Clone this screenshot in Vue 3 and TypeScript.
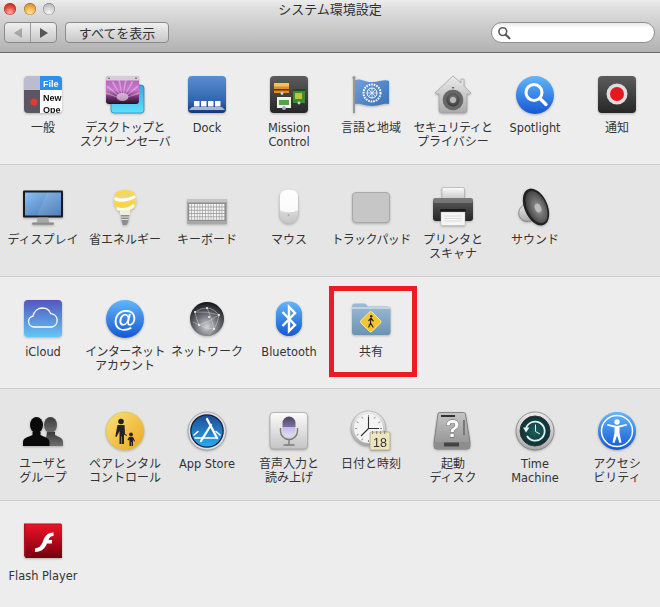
<script setup lang="ts">
interface Item { id: string; lines: string[] }
const sections: Item[][] = [
  [
    { id: 'general', lines: ['一般'] },
    { id: 'desktop', lines: ['デスクトップと', 'スクリーンセーバ'] },
    { id: 'dock', lines: ['Dock'] },
    { id: 'mission', lines: ['Mission', 'Control'] },
    { id: 'flag', lines: ['言語と地域'] },
    { id: 'security', lines: ['セキュリティと', 'プライバシー'] },
    { id: 'spotlight', lines: ['Spotlight'] },
    { id: 'notify', lines: ['通知'] },
  ],
  [
    { id: 'display', lines: ['ディスプレイ'] },
    { id: 'bulb', lines: ['省エネルギー'] },
    { id: 'keyboard', lines: ['キーボード'] },
    { id: 'mouse', lines: ['マウス'] },
    { id: 'trackpad', lines: ['トラックパッド'] },
    { id: 'printer', lines: ['プリンタと', 'スキャナ'] },
    { id: 'sound', lines: ['サウンド'] },
  ],
  [
    { id: 'icloud', lines: ['iCloud'] },
    { id: 'internet', lines: ['インターネット', 'アカウント'] },
    { id: 'network', lines: ['ネットワーク'] },
    { id: 'bluetooth', lines: ['Bluetooth'] },
    { id: 'share', lines: ['共有'] },
  ],
  [
    { id: 'users', lines: ['ユーザと', 'グループ'] },
    { id: 'parental', lines: ['ペアレンタル', 'コントロール'] },
    { id: 'appstore', lines: ['App Store'] },
    { id: 'dictation', lines: ['音声入力と', '読み上げ'] },
    { id: 'clock', lines: ['日付と時刻'] },
    { id: 'disk', lines: ['起動', 'ディスク'] },
    { id: 'timemachine', lines: ['Time', 'Machine'] },
    { id: 'access', lines: ['アクセシ', 'ビリティ'] },
  ],
  [{ id: 'flash', lines: ['Flash Player'] }],
]
const isLatin = (s: string) => /^[A-Za-z ]+$/.test(s)
const keys: { x: number; y: number; w: number }[] = []
for (let r = 0; r < 5; r++) {
  for (let c = 0; c < 13; c++) {
    keys.push({ x: 2.2 + c * 2.75, y: 18 + r * 3.3, w: 2.2 })
  }
}
const ticks = [0, 30, 60, 90, 120, 150, 180, 210, 240, 270, 300, 330]
const rays = [0, 45, 90, 135, 180, 225, 270, 315]
const bursts = [-70, -50, -30, -10, 10, 30, 50, 70]
</script>

<template>
  <div class="window">
    <svg class="defs" width="0" height="0" aria-hidden="true">
      <defs>
        <linearGradient id="gBlueCircle" x1="0" y1="0" x2="0" y2="1"><stop offset="0" stop-color="#62b6fb" /><stop offset="1" stop-color="#1458d2" /></linearGradient>
        <linearGradient id="gDock" x1="0" y1="0" x2="0" y2="1"><stop offset="0" stop-color="#5b8ed0" /><stop offset=".7" stop-color="#2f64ad" /><stop offset="1" stop-color="#16386e" /></linearGradient>
        <linearGradient id="gDark" x1="0" y1="0" x2="0" y2="1"><stop offset="0" stop-color="#5c5c5c" /><stop offset="1" stop-color="#262626" /></linearGradient>
        <linearGradient id="gSilver" x1="0" y1="0" x2="0" y2="1"><stop offset="0" stop-color="#ececec" /><stop offset="1" stop-color="#a9a9a9" /></linearGradient>
        <linearGradient id="gDiskTop" x1="0" y1="0" x2="0" y2="1"><stop offset="0" stop-color="#c4c4c4" /><stop offset="1" stop-color="#8f8f8f" /></linearGradient>
        <linearGradient id="gPink" x1="0" y1="0" x2="0" y2="1"><stop offset="0" stop-color="#b060b8" /><stop offset=".5" stop-color="#c878cc" /><stop offset=".78" stop-color="#6a3068" /><stop offset="1" stop-color="#241222" /></linearGradient>
        <linearGradient id="gCyan" x1="0" y1="0" x2="0" y2="1"><stop offset="0" stop-color="#3aa3e8" /><stop offset="1" stop-color="#5fe0fb" /></linearGradient>
        <linearGradient id="gFlag" x1="0" y1="0" x2="1" y2="1"><stop offset="0" stop-color="#6f9fdc" /><stop offset="1" stop-color="#3c6fb8" /></linearGradient>
        <linearGradient id="gScreen" x1="0" y1="0" x2="1" y2="1"><stop offset="0" stop-color="#8cc0f4" /><stop offset="1" stop-color="#3f70b0" /></linearGradient>
        <linearGradient id="gCloud" x1="0" y1="0" x2="0" y2="1"><stop offset="0" stop-color="#5456c0" /><stop offset="1" stop-color="#62c6f4" /></linearGradient>
        <linearGradient id="gFolder" x1="0" y1="0" x2="0" y2="1"><stop offset="0" stop-color="#9dbcd4" /><stop offset="1" stop-color="#6a93b2" /></linearGradient>
        <linearGradient id="gYellow" x1="0" y1="0" x2="1" y2="1"><stop offset="0" stop-color="#f6e27a" /><stop offset="1" stop-color="#eda61f" /></linearGradient>
        <linearGradient id="gAppStore" x1="0" y1="0" x2="0" y2="1"><stop offset="0" stop-color="#1d4d94" /><stop offset="1" stop-color="#28a9f4" /></linearGradient>
        <linearGradient id="gMic" x1="0" y1="0" x2="0" y2="1"><stop offset="0" stop-color="#4a4560" /><stop offset=".5" stop-color="#7a709c" /><stop offset=".55" stop-color="#c3b8ea" /><stop offset="1" stop-color="#e3dcf8" /></linearGradient>
        <linearGradient id="gDict" x1="0" y1="0" x2="0" y2="1"><stop offset="0" stop-color="#fbfbfb" /><stop offset="1" stop-color="#c4c4c4" /></linearGradient>
        <linearGradient id="gFlash" x1="0" y1="0" x2="0" y2="1"><stop offset="0" stop-color="#ee1226" /><stop offset="1" stop-color="#74000f" /></linearGradient>
        <linearGradient id="gPeople" x1="0" y1="0" x2="0" y2="1"><stop offset="0" stop-color="#3a3a3a" /><stop offset="1" stop-color="#6f6f6f" /></linearGradient>
        <radialGradient id="gSphere" cx=".5" cy=".72" r=".7"><stop offset="0" stop-color="#d0d0d6" /><stop offset=".45" stop-color="#77777f" /><stop offset="1" stop-color="#15151a" /></radialGradient>
        <radialGradient id="gCone" cx=".55" cy=".55" r=".6"><stop offset="0" stop-color="#c8c8c8" /><stop offset=".3" stop-color="#7e7e7e" /><stop offset="1" stop-color="#3a3a3a" /></radialGradient>
        <radialGradient id="gTeal" cx=".5" cy=".5" r=".55"><stop offset="0" stop-color="#1f5f60" /><stop offset="1" stop-color="#0a2c30" /></radialGradient>
        <radialGradient id="gDial" cx=".5" cy=".4" r=".6"><stop offset="0" stop-color="#8a8a8a" /><stop offset="1" stop-color="#333" /></radialGradient>
        <clipPath id="cGeneral"><rect x="1" y="2" width="38" height="37" rx="4" /></clipPath>
        <clipPath id="cDesktop"><rect x="1" y="2" width="33" height="28" rx="3" /></clipPath>
      </defs>
    </svg>

    <header class="toolbar">
      <div class="title-row">
        <div class="lights">
          <span class="light red"></span>
          <span class="light amber"></span>
          <span class="light grey"></span>
        </div>
        <span class="title">システム環境設定</span>
      </div>
      <div class="control-row">
        <div class="segment">
          <span class="seg-cell"><i class="arrow left off"></i></span>
          <span class="seg-cell"><i class="arrow right"></i></span>
        </div>
        <button class="show-all">すべてを表示</button>
        <div class="search">
          <svg width="14" height="14" viewBox="0 0 14 14"><circle cx="5.8" cy="5.6" r="3.9" fill="none" stroke="#5a5a5a" stroke-width="1.6" /><path d="M8.8 8.7 12.4 12.3" stroke="#5a5a5a" stroke-width="2.2" stroke-linecap="round" /></svg>
        </div>
      </div>
    </header>

    <section v-for="(row, i) in sections" :key="i" class="row" :class="{ alt: i % 2 === 1, last: i === 4 }">
      <div v-for="it in row" :key="it.id" class="cell">
        <svg class="icon" viewBox="0 0 40 40" width="40" height="40">
          <g v-if="it.id === 'general'" clip-path="url(#cGeneral)">
            <rect x="1" y="2" width="16" height="14" fill="#bcbbcf" />
            <rect x="1" y="16" width="16" height="23" fill="#5b5662" />
            <rect x="17" y="2" width="22" height="14" fill="#2b8ff0" />
            <rect x="17" y="16" width="22" height="23" fill="#fff" />
            <circle cx="11" cy="28" r="3.6" fill="#e23b32" />
            <text x="20" y="12.500" class="svgt" fill="#fff" font-size="9" font-weight="700">File</text>
            <text x="20" y="27" class="svgt" fill="#111" font-size="9" font-weight="700">New</text>
            <text x="20" y="39" class="svgt" fill="#111" font-size="9" font-weight="700">Ope</text>
          </g>
          <g v-else-if="it.id === 'desktop'">
            <rect x="6" y="11" width="33" height="28" rx="3" fill="url(#gCyan)" stroke="#1c6fb4" stroke-width=".6" />
            <g clip-path="url(#cDesktop)">
              <rect x="1" y="2" width="33" height="28" fill="url(#gPink)" />
              <g fill="#f6d9f6" opacity=".45"><path v-for="a in bursts" :key="a" d="M17.500 25 16.500 5h2z" :transform="`rotate(${a} 17.500 25)`" /></g>
              <ellipse cx="17.500" cy="23" rx="6" ry="4" fill="#f8e4f8" opacity=".6" />
              <rect x="1" y="2" width="33" height="4.500" fill="#d8ccd8" />
            </g>
            <circle cx="4" cy="4.200" r=".8" fill="#555" /><circle cx="31" cy="4.200" r=".8" fill="#555" />
          </g>
          <g v-else-if="it.id === 'dock'">
            <rect x="1" y="2" width="38" height="37" rx="4" fill="url(#gDock)" />
            <g fill="#fff"><rect x="7" y="27" width="5.500" height="5.500" /><rect x="14" y="27" width="5.500" height="5.500" /><rect x="21" y="27" width="5.500" height="5.500" /><rect x="28" y="27" width="5.500" height="5.500" /></g>
            <path d="M5 33h30l3 3H2z" fill="#cfdcf0" opacity=".75" />
          </g>
          <g v-else-if="it.id === 'mission'">
            <rect x="1" y="2" width="38" height="37" rx="4" fill="url(#gDark)" />
            <rect x="5" y="9" width="15" height="10" fill="#e38a2a" /><rect x="5" y="9" width="15" height="3.500" fill="#f3c25c" /><rect x="5" y="15" width="15" height="1.500" fill="#5a2e12" />
            <rect x="24" y="15" width="12" height="14" fill="#3f8a32" /><rect x="26" y="19" width="7" height="6" fill="#b6c93c" /><rect x="24" y="15" width="12" height="2" fill="#1e4a1c" />
            <rect x="8" y="23" width="14" height="11" fill="#eef2e8" /><rect x="10" y="26" width="10" height="5" fill="#58a14a" />
            <circle cx="13" cy="19.500" r="1.400" fill="#cdd3de" /><circle cx="30" cy="29" r="1.400" fill="#cdd3de" /><circle cx="15" cy="34" r="2" fill="#b9a4d8" />
          </g>
          <g v-else-if="it.id === 'flag'">
            <rect x="2.200" y="4" width="1.600" height="35" fill="#8d8d8d" />
            <circle cx="3" cy="3.600" r="1.600" fill="#9a9a9a" />
            <path d="M4 6c6-2 9 2 17 2s12-3 17-1v23c-6-1-9 2-17 2s-11-3-17-2z" fill="url(#gFlag)" />
            <circle cx="21" cy="19" r="8.500" fill="none" stroke="#fff" stroke-width="2" stroke-dasharray="1.600 1" />
            <circle cx="21" cy="19" r="5" fill="none" stroke="#fff" stroke-width="1" />
            <g stroke="#fff" stroke-width=".7"><line v-for="a in rays" :key="a" x1="21" y1="19" x2="21" y2="14" :transform="`rotate(${a} 21 19)`" /></g>
          </g>
          <g v-else-if="it.id === 'security'">
            <path d="M20 2 28 9V5h3v7l7 7-2 1H34V36a3 3 0 0 1-3 3H9a3 3 0 0 1-3-3V20H4l-2-1z" fill="url(#gSilver)" stroke="#9a9a9a" stroke-width=".6" />
            <circle cx="20" cy="26" r="10.500" fill="#666" /><circle cx="20" cy="26" r="10.500" fill="none" stroke="#c7c7c7" stroke-dasharray="1 1" stroke-width=".8" />
            <circle cx="20" cy="26" r="6.500" fill="url(#gDial)" /><circle cx="20" cy="26" r="3" fill="#bbb" />
            <path d="M18.500 13 20 15 21.500 13z" fill="#666" />
          </g>
          <g v-else-if="it.id === 'spotlight'">
            <circle cx="20" cy="21" r="19" fill="url(#gBlueCircle)" />
            <circle cx="19" cy="18.500" r="8" fill="none" stroke="#fff" stroke-width="3" />
            <path d="M25 24.500 31 30.500" stroke="#fff" stroke-width="3.400" stroke-linecap="round" />
          </g>
          <g v-else-if="it.id === 'notify'">
            <rect x="1" y="2" width="38" height="37" rx="4" fill="url(#gDark)" />
            <circle cx="20" cy="20" r="10.500" fill="#ddd" /><circle cx="20" cy="20" r="7" fill="#e8161f" />
          </g>
          <g v-else-if="it.id === 'display'">
            <rect x="0" y="4.500" width="40" height="27" rx="1" fill="#1b1b1b" />
            <rect x="2" y="6.500" width="36" height="23" fill="url(#gScreen)" />
            <path d="M24 6.500H38V29.500H14z" fill="#fff" opacity=".1" />
            <path d="M15 31.500h10l1 5H14z" fill="#a8a8a8" />
            <rect x="9" y="36.500" width="22" height="2.200" rx="1" fill="#8b8b8b" />
          </g>
          <g v-else-if="it.id === 'bulb'">
            <ellipse cx="20" cy="15" rx="11.500" ry="11" fill="#ffe36a" opacity=".7" />
            <g fill="none" stroke-linecap="round" stroke-width="3.200">
              <path d="M12 8c4-3 13-3 16 0" stroke="#ffd83c" />
              <path d="M11 13c5 2 13 1 18-2" stroke="#fffdf0" />
              <path d="M11 18c5 2 13 1 18-2" stroke="#ffd534" />
              <path d="M13 23c4 1 10 1 15-3" stroke="#fffbe2" />
            </g>
            <rect x="15" y="24" width="10" height="5" rx="1" fill="#efeee2" />
            <path d="M16 29h8l-.8 7-1.700 3h-3.500l-1.200-3z" fill="#8e8e8e" />
            <g stroke="#e4e4e4" stroke-width=".9"><line x1="16" y1="31" x2="24" y2="31" /><line x1="16.400" y1="33.500" x2="23.600" y2="33.500" /></g>
          </g>
          <g v-else-if="it.id === 'keyboard'">
            <rect x="0" y="13" width="40" height="25" rx="1" fill="#a8a8a8" />
            <rect x="0" y="13" width="40" height="3" fill="#c4c4c4" />
            <rect x="1" y="17" width="38" height="18" fill="#8e8e8e" />
            <rect v-for="(k, n) in keys" :key="n" :x="k.x" :y="k.y" :width="k.w" height="2.600" fill="#f4f4f4" />
          </g>
          <g v-else-if="it.id === 'mouse'">
            <rect x="10.300" y="3.300" width="19" height="34.500" rx="9.500" fill="url(#gDict)" stroke="#bdbdbd" stroke-width=".5" />
            <path d="M11 10c0-5 4-6.500 9-6.500s9 1.500 9 6.500v14c-5 3-13 3-18 0z" fill="#fff" opacity=".85" />
            <circle cx="19.500" cy="29" r="1" fill="#a5a5a5" />
          </g>
          <g v-else-if="it.id === 'trackpad'">
            <rect x="1.500" y="6.500" width="37" height="30" rx="3.500" fill="#c6c6c6" stroke="#a9a9a9" stroke-width="1" />
          </g>
          <g v-else-if="it.id === 'printer'">
            <path d="M10.500 1.500h19q2 0 2 2V14H9V3.500q0-2 1.500-2z" fill="url(#gDict)" stroke="#999" stroke-width=".5" />
            <path d="M3 12h34q3 0 3 3v17q0 3-3 3H3q-3 0-3-3V15q0-3 3-3z" fill="url(#gDark)" />
            <rect x="0" y="12" width="40" height="5" fill="#8d8d8d" opacity=".6" rx="2" />
            <rect x="7" y="23" width="26" height="3" rx="1" fill="#1c1c1c" />
            <rect x="8" y="26" width="24" height="13.500" fill="#f6f6f6" stroke="#aaa" stroke-width=".4" />
            <g stroke="#cfcfcf" stroke-width=".6"><line x1="11" y1="30" x2="29" y2="30" /><line x1="11" y1="32.500" x2="29" y2="32.500" /><line x1="11" y1="35" x2="29" y2="35" /></g>
          </g>
          <g v-else-if="it.id === 'sound'">
            <path d="M4 25c1-4 5-7 9-7l8 14c-3 3-8 4-12 3-4-2-6-6-5-10z" fill="url(#gSilver)" stroke="#666" stroke-width=".6" />
            <ellipse cx="21" cy="21" rx="11.500" ry="19.500" transform="rotate(-24 21 21)" fill="#222" />
            <ellipse cx="21.500" cy="21" rx="9.500" ry="17" transform="rotate(-24 21.500 21)" fill="url(#gCone)" />
            <ellipse cx="23" cy="22" rx="3" ry="4.500" transform="rotate(-24 23 22)" fill="#bdbdbd" />
          </g>
          <g v-else-if="it.id === 'icloud'">
            <rect x="1" y="2" width="38" height="37" rx="4" fill="url(#gCloud)" />
            <path d="M11 29a5.500 5.500 0 0 1-1-10.900C11 13 15 10 19.500 10c4 0 7 2.300 8.200 5.600A6.800 6.800 0 0 1 29 29z" fill="none" stroke="#fff" stroke-width="1.300" />
          </g>
          <g v-else-if="it.id === 'internet'">
            <circle cx="20" cy="21" r="19" fill="url(#gBlueCircle)" />
            <text x="20" y="29" text-anchor="middle" class="svgt" fill="#fff" font-size="24" font-weight="700">@</text>
          </g>
          <g v-else-if="it.id === 'network'">
            <circle cx="20" cy="21" r="17" fill="url(#gSphere)" />
            <g stroke="#e4e4ea" stroke-width=".5" fill="none" opacity=".85">
              <path d="M8 14Q14 10 20 10T32 17Q31 25 27 31 19 31 12 27 9 20 8 14z" /><path d="M20 10Q25 20 27 31M8 14Q20 13 32 17M12 27Q22 24 32 17M6 24 12 27M27 31 22 37" />
            </g>
            <g fill="#fff"><circle cx="8" cy="14" r=".9" /><circle cx="20" cy="10" r=".9" /><circle cx="32" cy="17" r=".9" /><circle cx="27" cy="31" r=".9" /><circle cx="12" cy="27" r=".9" /><circle cx="22" cy="19" r=".9" /></g>
          </g>
          <g v-else-if="it.id === 'bluetooth'">
            <rect x="7" y="3.500" width="26" height="34.500" rx="12.500" fill="url(#gBlueCircle)" />
            <path d="M13.500 14 26 27 20 33V9l6 6-12.500 13" fill="none" stroke="#fff" stroke-width="2.400" />
          </g>
          <g v-else-if="it.id === 'share'">
            <path d="M1 9q0-3.500 3-3.500h9q2 0 3 2l.5 1H36q3.500 0 3.500 3V34q0 3-3 3H4q-3 0-3-3z" fill="url(#gFolder)" />
            <rect x="1" y="9" width="38.500" height="2" fill="#c9dce9" opacity=".8" />
            <rect x="12" y="16" width="15.500" height="15.500" rx="2" transform="rotate(45 19.750 23.750)" fill="#f5c52c" stroke="#fff3b8" stroke-width=".8" />
            <circle cx="20.200" cy="18.300" r="1.200" fill="#222" />
            <path d="M20 20.200 17.800 22.500M20 20.200 22.200 22.800M20 20.200 19.500 25 17.800 29M19.500 25 22 29" stroke="#222" stroke-width="1.200" fill="none" stroke-linecap="round" />
          </g>
          <g v-else-if="it.id === 'users'">
            <g fill="url(#gPeople)"><ellipse cx="27.500" cy="15" rx="6.500" ry="8" /><path d="M24 22h8v3c4 2 8 3 8 7v4H22z" /></g>
            <g fill="#0a0a0a"><ellipse cx="13.500" cy="15" rx="6.500" ry="8" /><path d="M9.500 22h8v3c4 2 9 3 9 7v4H0v-4c0-4 5-5 9.500-7z" /></g>
          </g>
          <g v-else-if="it.id === 'parental'">
            <circle cx="20" cy="21" r="19" fill="url(#gYellow)" stroke="#d8c34e" stroke-width=".6" />
            <g fill="#222">
              <circle cx="16" cy="11.500" r="2.800" /><path d="M12.500 15h7l.5 9 2 1-.5 1-2.500-1.500V34h-2v-7.500h-.5V34h-2V21l-3 6-1.200-.6z" />
              <circle cx="26" cy="24.500" r="1.900" /><path d="M24 27h4l2 4-.9.5-1.100-2V36h-1.500v-4h-.5v4H24.500v-6.500l-1 1-1-.8z" />
            </g>
          </g>
          <g v-else-if="it.id === 'appstore'">
            <circle cx="20" cy="21" r="19" fill="#dfdfdf" stroke="#8a8a8a" stroke-width=".6" />
            <circle cx="20" cy="21" r="16.800" fill="#10223f" />
            <circle cx="20" cy="21" r="15.500" fill="url(#gAppStore)" />
            <g stroke="#fff" stroke-width="2.300" stroke-linecap="round" fill="none"><path d="M20 9 30 28" /><path d="M24 15 14 31" /><path d="M8 28h22" stroke-width="1.600" /><path d="M11 21.500 7 25" stroke-width="1.600" /><path d="M29 21.500 33 25" stroke-width="1.600" /></g>
          </g>
          <g v-else-if="it.id === 'dictation'">
            <rect x="1" y="2.500" width="37.500" height="36.500" rx="3.500" fill="url(#gDict)" stroke="#9f9f9f" stroke-width=".7" />
            <rect x="13.500" y="6.500" width="13" height="20" rx="6.500" fill="url(#gMic)" />
            <path d="M11.500 18v3a8.500 8.500 0 0 0 17 0v-3M20 29.500V35M14.500 35h11" fill="none" stroke="#7a7a7a" stroke-width="1.400" />
          </g>
          <g v-else-if="it.id === 'clock'">
            <circle cx="17.500" cy="18.500" r="17.500" fill="url(#gSilver)" stroke="#9a9a9a" stroke-width=".5" />
            <circle cx="17.500" cy="18.500" r="14.500" fill="#f4f4f4" />
            <g stroke="#777" stroke-width=".8"><line v-for="a in ticks" :key="a" x1="17.500" y1="5" x2="17.500" y2="7" :transform="`rotate(${a} 17.500 18.500)`" /></g>
            <path d="M17.500 18.500V7M17.500 18.500H28M17.500 18.500 10 26" stroke="#333" stroke-width="1.100" fill="none" />
            <rect x="19" y="22" width="20" height="18" rx="1" fill="#ece5bd" stroke="#9c9670" stroke-width=".6" />
            <g fill="#8d8d8d"><rect x="21" y="21" width="1.200" height="3" /><rect x="25" y="21" width="1.200" height="3" /><rect x="29" y="21" width="1.200" height="3" /><rect x="33" y="21" width="1.200" height="3" /></g>
            <text x="29" y="37" text-anchor="middle" class="svgt light-weight" fill="#333" font-size="12.500">18</text>
          </g>
          <g v-else-if="it.id === 'disk'">
            <path d="M6.500 2.500h24q1.500 0 2 1.500L37 32v4q0 3-3 3H4q-3 0-3-3v-4L5 4q.3-1.500 1.500-1.500z" fill="url(#gDiskTop)" stroke="#666" stroke-width=".7" />
            <path d="M1 32h36v4q0 3-3 3H4q-3 0-3-3z" fill="#8d8d8d" />
            <rect x="11" y="32.500" width="15" height="4" fill="#444" />
            <rect x="8" y="5" width="14" height="2" fill="#333" />
            <rect x="30" y="10" width="2" height="15" fill="#777" />
            <text x="19.500" y="27" text-anchor="middle" class="svgt qmark" fill="#fff" font-size="24" font-weight="700">?</text>
          </g>
          <g v-else-if="it.id === 'timemachine'">
            <circle cx="20" cy="21" r="19" fill="url(#gSilver)" stroke="#666" stroke-width=".6" />
            <circle cx="20" cy="21" r="15" fill="url(#gTeal)" stroke="#333" stroke-width="1" />
            <path d="M11 18.500a9.500 9.500 0 1 1 1 7.500" fill="none" stroke="#e6f0f0" stroke-width="1.800" />
            <path d="M8 17.500h6.500L11 22.500z" fill="#e6f0f0" />
            <path d="M20.500 14.500V21.500L25 24" fill="none" stroke="#e6f0f0" stroke-width="1" />
          </g>
          <g v-else-if="it.id === 'access'">
            <circle cx="20" cy="21" r="19" fill="url(#gBlueCircle)" />
            <circle cx="20" cy="21" r="15.500" fill="none" stroke="#fff" stroke-width="1.500" />
            <circle cx="20" cy="12" r="2.700" fill="#fff" />
            <path d="M10 15.500 17.500 17.500V23L15.500 32.500 17.500 33 20 25.500 22.500 33 24.500 32.500 22.500 23V17.500L30 15.500 29.500 14 20 16 10.500 14z" fill="#fff" />
          </g>
          <g v-else-if="it.id === 'flash'">
            <path d="M1 1.500h37l1 1.500v33H3l-2-2z" fill="#b21020" />
            <rect x="2.500" y="2.500" width="36.500" height="33.500" fill="url(#gFlash)" />
            <path d="M30.500 10.500v3.500c-3 0-4 1.500-5 4h3.500v3.500h-5c-2 5-5 8-12 8.500v-3.500c4-.5 6-2.500 7.500-6 1.500-4 3.500-10 11-10z" fill="#fff" />
          </g>
        </svg>
        <div class="label" :class="{ latin: isLatin(it.lines[0]) }">
          <span v-for="l in it.lines" :key="l" class="line" :class="{ tight: !isLatin(l) && l.length >= 7 }">{{ l }}</span>
        </div>
      </div>
      <div v-if="i === 2" class="highlight"></div>
    </section>
  </div>
</template>

<style scoped>
.window {
  width: 660px;
  height: 607px;
  display: flex;
  flex-direction: column;
  overflow: hidden;
  background: #ededed;
  font-family: "DejaVu Sans", "Noto Sans CJK JP", sans-serif;
  color: #333;
}
.defs {
  position: absolute;
}
.toolbar {
  flex: none;
  background: linear-gradient(#ececec, #dcdcdc 20%, #b2b2b2);
  border-bottom: 1px solid #6c6c6c;
  padding: 0 4px;
  display: flex;
  flex-direction: column;
  box-sizing: border-box;
  height: 53px;
}
.title-row {
  height: 22px;
  flex: none;
  position: relative;
  display: flex;
  justify-content: center;
  align-items: flex-start;
}
.lights {
  position: absolute;
  left: 0;
  top: 3px;
  display: flex;
  gap: 7.5px;
}
.light {
  width: 12px;
  height: 12px;
  border-radius: 50%;
  box-shadow: inset 0 0 0 .5px rgba(0, 0, 0, .35);
}
.red { background: radial-gradient(circle at 50% 80%, #ffb0a8, #e8423c 55%, #a8221f); }
.amber { background: radial-gradient(circle at 50% 80%, #ffe6a0, #eca93e 55%, #b87820); }
.grey { background: radial-gradient(circle at 50% 80%, #f6f6f6, #c8c8c8 60%, #9a9a9a); }
.title {
  font: 13px/18px "Noto Sans CJK JP", sans-serif;
  color: #2e2e2e;
}
.control-row {
  display: flex;
  align-items: flex-start;
  height: 22px;
}
.segment {
  width: 53px;
  height: 21px;
  display: flex;
  border: 1px solid #8a8a8a;
  border-radius: 4px;
  box-sizing: border-box;
  background: linear-gradient(#f0f0f0, #c8c8c8);
}
.seg-cell {
  flex: 1;
  display: flex;
  align-items: center;
  justify-content: center;
}
.seg-cell:first-child {
  border-right: 1px solid #9a9a9a;
}
.arrow {
  width: 0;
  height: 0;
  border-top: 5px solid transparent;
  border-bottom: 5px solid transparent;
}
.arrow.left { border-right: 8px solid #555; }
.arrow.right { border-left: 8px solid #555; }
.arrow.off { opacity: .4; }
.show-all {
  margin-left: 8px;
  width: 104px;
  height: 21px;
  padding: 0;
  border: 1px solid #8a8a8a;
  border-radius: 4px;
  background: linear-gradient(#f0f0f0, #c8c8c8);
  font: 13px/18px "Noto Sans CJK JP", sans-serif;
  color: #333;
}
.search {
  margin-left: auto;
  margin-right: 1px;
  width: 164px;
  height: 21px;
  box-sizing: border-box;
  border: 1px solid #8e8e8e;
  border-radius: 11px;
  background: linear-gradient(#e8e8e8, #fff 25%);
  display: flex;
  align-items: center;
  padding-left: 5px;
}
.row {
  height: 112px;
  flex: none;
  box-sizing: border-box;
  padding: 21px 0 0 2px;
  display: grid;
  grid-template-columns: repeat(8, 82px);
  justify-content: start;
  align-content: start;
  border-bottom: 1px solid #cfcfcf;
  position: relative;
  background: #ededed;
}
.row.alt { background: #e5e5e5; }
.row.last { border-bottom: 0; flex: 1; }
.cell {
  display: flex;
  flex-direction: column;
  align-items: center;
  min-width: 0;
}
.icon {
  display: block;
  overflow: visible;
  filter: drop-shadow(0 1px 1px rgba(0, 0, 0, .25));
}
.svgt {
  font-family: "Liberation Sans", sans-serif;
}
.light-weight {
  font-weight: 400;
}
.qmark {
  stroke: #555;
  stroke-width: .8px;
  paint-order: stroke;
}
.label {
  margin-top: 7px;
  display: flex;
  flex-direction: column;
  align-items: center;
  font-size: 12px;
  line-height: 14px;
  white-space: nowrap;
  width: 82px;
}
.label.latin {
  font-size: 11.4px;
}
.line {
  display: block;
}
.line.tight {
  letter-spacing: -.62px;
}
.highlight {
  position: absolute;
  left: 329px;
  top: 9px;
  width: 88px;
  height: 91px;
  box-sizing: border-box;
  border: 5px solid #ed1c24;
}
</style>
